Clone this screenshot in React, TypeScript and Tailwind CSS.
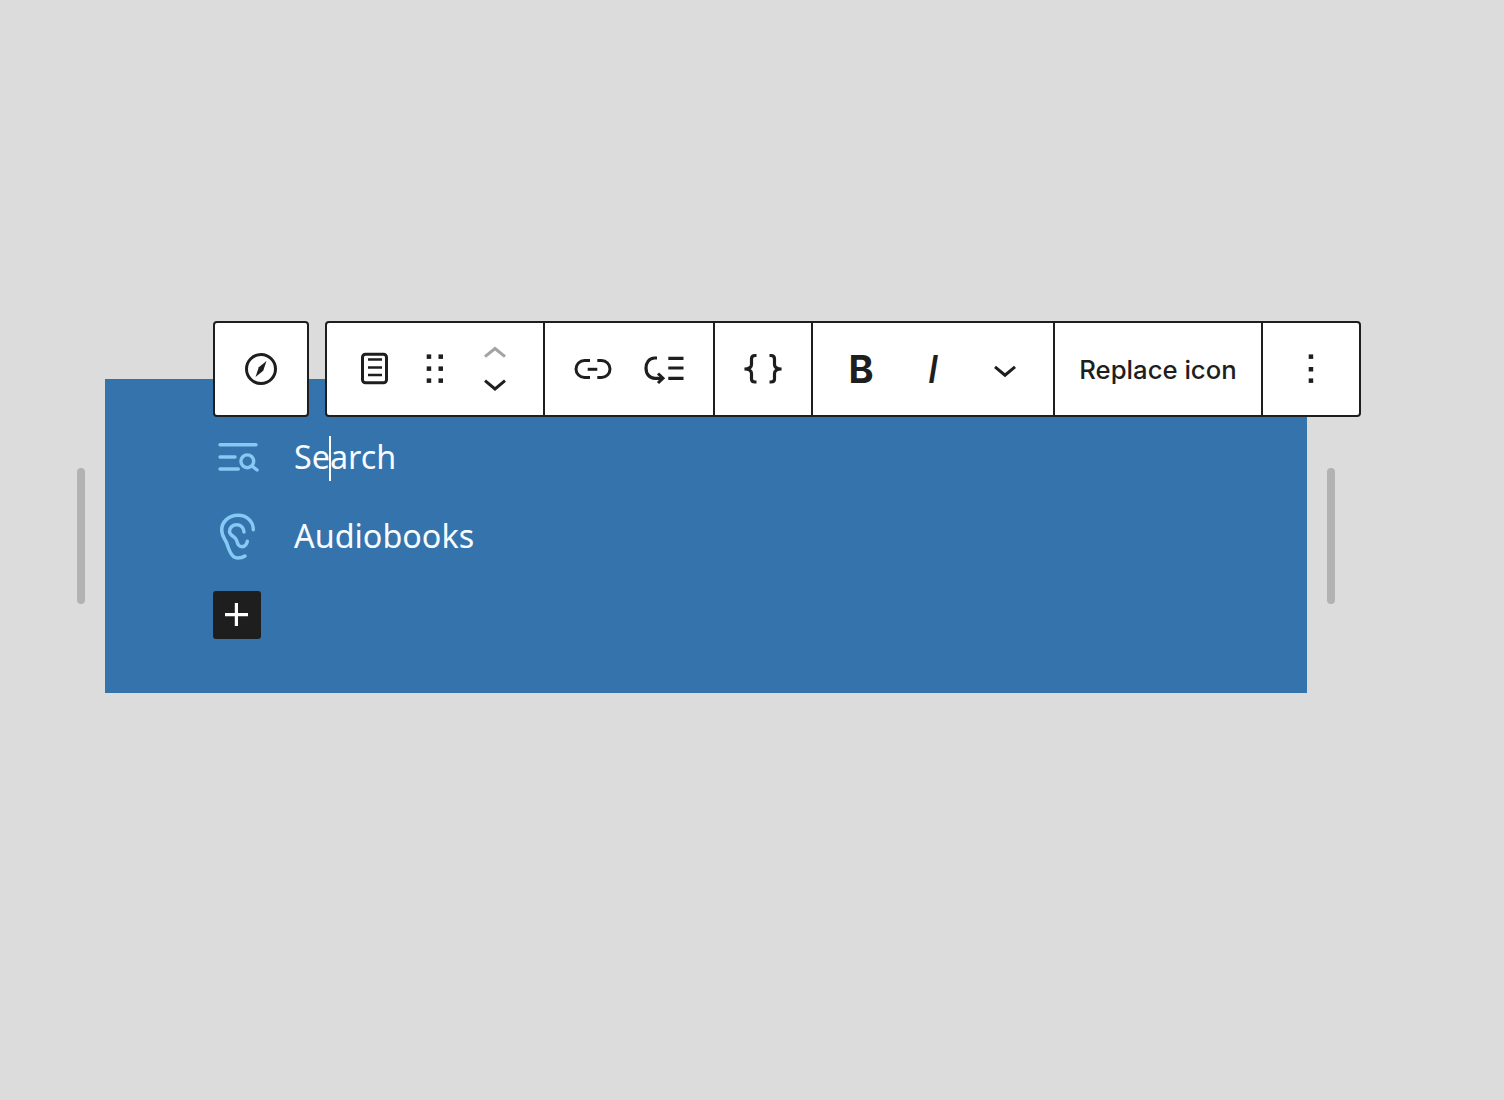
import type { ReactNode } from 'react';

const ICON_STROKE = '#1e1e1e';

function Icon({ children }: { children: ReactNode }) {
  return (
    <svg width="48" height="48" viewBox="0 0 48 48" fill="none" stroke={ICON_STROKE} strokeWidth="3">
      {children}
    </svg>
  );
}

function ToolButton({ width = 'w-[72px]', children }: { width?: string; children: ReactNode }) {
  return <div className={`flex h-full shrink-0 items-center justify-center ${width}`}>{children}</div>;
}

function Dots({ positions }: { positions: [number, number][] }) {
  return (
    <svg width="48" height="48" viewBox="0 0 48 48" fill={ICON_STROKE}>
      {positions.map(([x, y]) => (
        <rect key={`${x}-${y}`} x={x} y={y} width="4.5" height="4.5" />
      ))}
    </svg>
  );
}

function Toolbar() {
  return (
    <div className="absolute left-[108px] top-[-58px] flex h-[96px] gap-4 text-[#1e1e1e]">
      {/* Block switcher */}
      <div className="flex w-[96px] items-center justify-center rounded border-2 border-[#1e1e1e] bg-white">
        <Icon>
          <circle cx="24" cy="24" r="14.5" />
          <path d="M29.5 16 L26.2 25.8 L18.5 32 L21.8 22.2 Z" fill={ICON_STROKE} stroke="none" />
        </Icon>
      </div>

      <div className="flex rounded border-2 border-[#1e1e1e] bg-white">
        {/* Page, drag, move */}
        <div className="flex border-r-2 border-[#1e1e1e] px-[18px]">
          <ToolButton width="w-[60px]">
            <Icon>
              <rect x="11.5" y="9.2" width="24" height="28.5" rx="3" />
              <path d="M17 14.5 H31 M17 22.5 H31 M17 30 H31" strokeWidth="2.6" />
            </Icon>
          </ToolButton>
          <ToolButton width="w-[60px]">
            <Dots
              positions={[
                [15.7, 9.4],
                [27.5, 9.4],
                [15.7, 21.4],
                [27.5, 21.4],
                [15.7, 33.4],
                [27.5, 33.4],
              ]}
            />
          </ToolButton>
          <ToolButton width="w-[60px]">
            <Icon>
              <path d="M14 11.7 L24 3.5 L34 11.7" stroke="#a3a3a3" />
              <path d="M14 35.7 L24 44 L34 35.7" />
            </Icon>
          </ToolButton>
        </div>

        {/* Link, list */}
        <div className="flex border-r-2 border-[#1e1e1e] px-3">
          <ToolButton>
            <Icon>
              <path d="M21 15.5 H15.5 A8.5 8.5 0 0 0 15.5 32.5 H21" />
              <path d="M28.3 15.5 H32.5 A8.5 8.5 0 0 1 32.5 32.5 H28.3" />
              <path d="M18.7 24.3 H28.3" />
            </Icon>
          </ToolButton>
          <ToolButton>
            <Icon>
              <path d="M27.3 13.3 H42.5 M27.3 23 H42.5 M27.3 33.3 H42.5" strokeWidth="3.2" />
              <path d="M16 13 H13.5 C8 13 5 18 5 23 C5 29 8.5 33.3 14 33.3 H20" strokeWidth="3.2" />
              <path d="M17 28.5 L22 33.2 L17 38" strokeWidth="3" />
            </Icon>
          </ToolButton>
        </div>

        {/* Braces */}
        <div className="flex border-r-2 border-[#1e1e1e] px-3">
          <ToolButton>
            <Icon>
              <path
                d="M17.5 10.5 H16 C13.5 10.5 12.5 11.8 12.5 14 V19.5 C12.5 22 11 23.8 5.5 24 C11 24.2 12.5 26 12.5 28.5 V34 C12.5 36 13.5 37 16 37 H17.5"
                strokeWidth="3.2"
              />
              <path
                d="M30.5 10.5 H32 C34.5 10.5 35.5 11.8 35.5 14 V19.5 C35.5 22 37 23.8 42.5 24 C37 24.2 35.5 26 35.5 28.5 V34 C35.5 36 34.5 37 32 37 H30.5"
                strokeWidth="3.2"
              />
            </Icon>
          </ToolButton>
        </div>

        {/* Formatting */}
        <div className="flex border-r-2 border-[#1e1e1e] px-3">
          <ToolButton>
            <span className="font-['Inter',sans-serif] text-[38px] font-bold leading-none">B</span>
          </ToolButton>
          <ToolButton>
            <span className="font-['Inter',sans-serif] text-[38px] font-medium italic leading-none">I</span>
          </ToolButton>
          <ToolButton>
            <Icon>
              <path d="M14 21.8 L24 30.2 L34 21.8" />
            </Icon>
          </ToolButton>
        </div>

        {/* Replace */}
        <div className="flex w-[208px] items-center justify-center border-r-2 border-[#1e1e1e] pt-[2px]">
          <span className="font-['Inter',sans-serif] text-[25.7px] font-medium leading-none">Replace icon</span>
        </div>

        {/* More */}
        <ToolButton width="w-[96px]">
          <Dots
            positions={[
              [21.7, 9.4],
              [21.7, 22],
              [21.7, 33.4],
            ]}
          />
        </ToolButton>
      </div>
    </div>
  );
}

function Handle() {
  return <div className="h-[136px] w-2 shrink-0 rounded-full bg-[#b2b2b2]" />;
}

export default function App() {
  return (
    <div className="min-h-[1100px] bg-[#dcdcdc] pl-[77px] pt-[379px]">
      <div className="flex items-center gap-5">
        <Handle />
        <div className="relative h-[314px] w-[1202px] shrink-0 bg-[#3573ac] pl-[108px] pt-[54px]">
          <Toolbar />
          <div className="flex flex-col gap-[31px] font-['Noto_Sans',sans-serif] text-[32.35px] leading-none text-[#f8fbfe]">
            <div className="flex h-12 items-center gap-[33px]">
              <svg width="48" height="48" viewBox="0 0 48 48" fill="none" stroke="#86c9f4" strokeWidth="3.4" strokeLinecap="round" className="shrink-0">
                <path d="M7 11.7 H43 M7 24 H22 M7 36 H25.3" />
                <circle cx="34.3" cy="28.3" r="6.4" />
                <path d="M39 33 L44 37" />
              </svg>
              <span className="-mt-[2px]">
                Se
                <span className="relative inline-block h-0 w-0">
                  <span className="absolute left-[-1px] top-[-33px] h-[45px] w-[2px] bg-white" />
                </span>
                arch
              </span>
            </div>
            <div className="flex h-12 items-center gap-[33px]">
              <svg width="48" height="48" viewBox="0 0 48 48" fill="none" stroke="#86c9f4" strokeWidth="3.5" strokeLinecap="round" className="shrink-0">
                <path d="M40.3 17.7 C40.3 9 33.5 3.3 25 3.3 C15.5 3.3 8.7 10 8.7 18 C8.7 24 12 27 13.7 31 C15 35 16 38 17.7 41 C19.5 44.5 21.5 46 24.5 46 C27.5 46 30 45.5 32 44" />
                <path d="M31 20 C31 15.5 27.5 12.7 23.7 12.7 C19.8 12.7 16.5 15.5 16.5 19.5 C16.5 23 20.5 24 22.5 26.5 C24.5 29 24 31 25.5 33 C27 35 31 35.5 33 32.5 C33.8 31.5 34 30.5 34.3 29.3" />
              </svg>
              <span className="-mt-[2px]">Audiobooks</span>
            </div>
            <div className="flex h-12 w-12 items-center justify-center rounded-[3px] bg-[#1e1e1e]">
              <svg width="48" height="48" viewBox="0 0 48 48" fill="none" stroke="#ffffff" strokeWidth="3.2">
                <path d="M12 23.7 H35 M23.4 12 V35" />
              </svg>
            </div>
          </div>
        </div>
        <Handle />
      </div>
    </div>
  );
}
